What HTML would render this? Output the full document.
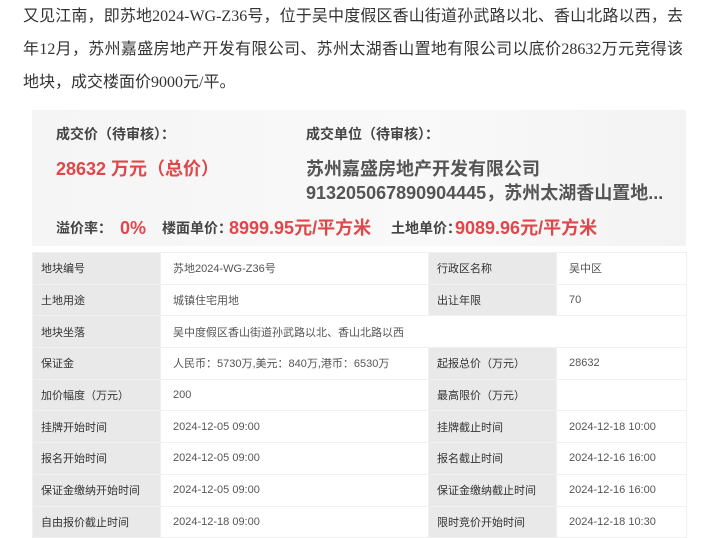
<!DOCTYPE html>
<html><head><meta charset="utf-8"><style>
body{margin:0;background:#fff;width:703px;height:530px;overflow:hidden;font-family:"Liberation Sans","Noto Sans CJK SC",sans-serif;}
.p{position:absolute;left:23px;top:0;width:660px;font-family:"Liberation Serif","Noto Sans CJK SC",serif;font-size:16px;line-height:33px;color:#333;text-align:justify;text-align-last:left;}
.card{position:absolute;left:32px;top:110px;width:654px;height:136px;background:linear-gradient(90deg,#f5f5f5,#f9f9f9 60%,#f3f3f3);}
.t{position:absolute;white-space:nowrap;color:#444;line-height:20px;}
.r{color:#e0474a;font-weight:bold;}
table{position:absolute;left:32px;top:252px;width:654px;border-collapse:collapse;font-size:11px;color:#555;table-layout:fixed;}
td{height:31.7px;padding:0 0 0 12px;border:1px solid #f0f0f0;box-sizing:border-box;white-space:nowrap;overflow:hidden;}
td.l{background:#e9e9e9;color:#333;padding-left:8px;}
</style></head><body>
<div class="p">又见江南，即苏地2024-WG-Z36号，位于吴中度假区香山街道孙武路以北、香山北路以西，去年12月，苏州嘉盛房地产开发有限公司、苏州太湖香山置地有限公司以底价28632万元竞得该地块，成交楼面价9000元/平。</div>
<div class="card">
<div class="t" style="left:24px;top:14px;font-size:14px;font-weight:bold;">成交价（待审核）：</div>
<div class="t" style="left:274px;top:14px;font-size:14px;font-weight:bold;">成交单位（待审核）：</div>
<div class="t r" style="left:24px;top:49px;font-size:18px;">28632 万元（总价）</div>
<div class="t" style="left:274px;top:47px;font-size:18px;font-weight:bold;color:#555;line-height:24px;">苏州嘉盛房地产开发有限公司<br>913205067890904445，苏州太湖香山置地...</div>
<div class="t" style="left:24px;top:108px;font-size:14px;font-weight:bold;">溢价率：</div>
<div class="t r" style="left:88px;top:108px;font-size:18px;">0%</div>
<div class="t" style="left:130px;top:108px;font-size:14px;font-weight:bold;">楼面单价：</div>
<div class="t r" style="left:197px;top:108px;font-size:18px;">8999.95元/平方米</div>
<div class="t" style="left:359px;top:108px;font-size:14px;font-weight:bold;">土地单价：</div>
<div class="t r" style="left:423px;top:108px;font-size:18px;">9089.96元/平方米</div>
</div>
<table>
<col style="width:128px"><col style="width:268px"><col style="width:128px"><col style="width:130px">
<tr><td class="l">地块编号</td><td>苏地2024-WG-Z36号</td><td class="l">行政区名称</td><td>吴中区</td></tr>
<tr><td class="l">土地用途</td><td>城镇住宅用地</td><td class="l">出让年限</td><td>70</td></tr>
<tr><td class="l">地块坐落</td><td colspan="3">吴中度假区香山街道孙武路以北、香山北路以西</td></tr>
<tr><td class="l">保证金</td><td>人民币：5730万,美元：840万,港币：6530万</td><td class="l">起报总价（万元）</td><td>28632</td></tr>
<tr><td class="l">加价幅度（万元）</td><td>200</td><td class="l">最高限价（万元）</td><td></td></tr>
<tr><td class="l">挂牌开始时间</td><td>2024-12-05 09:00</td><td class="l">挂牌截止时间</td><td>2024-12-18 10:00</td></tr>
<tr><td class="l">报名开始时间</td><td>2024-12-05 09:00</td><td class="l">报名截止时间</td><td>2024-12-16 16:00</td></tr>
<tr><td class="l">保证金缴纳开始时间</td><td>2024-12-05 09:00</td><td class="l">保证金缴纳截止时间</td><td>2024-12-16 16:00</td></tr>
<tr><td class="l">自由报价截止时间</td><td>2024-12-18 09:00</td><td class="l">限时竞价开始时间</td><td>2024-12-18 10:30</td></tr>
</table>
</body></html>
